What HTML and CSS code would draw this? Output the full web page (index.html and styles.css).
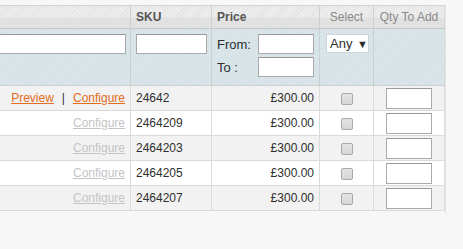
FILE: index.html
```html
<!DOCTYPE html>
<html lang="en">
<head>
    <meta charset="UTF-8">
    <title>Associated Products</title>
    <link rel="stylesheet" href="styles.css">
</head>
<body>
    <div class="grid">
        <table class="data">
            <colgroup>
                <col class="col-name">
                <col class="col-sku">
                <col class="col-price">
                <col class="col-select">
                <col class="col-qty">
            </colgroup>
            <thead>
                <tr class="headings">
                    <th></th>
                    <th class="sort">SKU</th>
                    <th class="sort">Price</th>
                    <th class="no-link center">Select</th>
                    <th class="no-link center">Qty To Add</th>
                </tr>
                <tr class="filter">
                    <th><input type="text" class="input-name"></th>
                    <th><input type="text" class="input-sku"></th>
                    <th>
                        <div class="range">
                            <div class="range-line"><span>From:</span><input type="text" class="input-range"></div>
                            <div class="range-line"><span>To :</span><input type="text" class="input-range"></div>
                        </div>
                    </th>
                    <th><div class="select-any">Any <span class="arrow">&#9660;</span></div></th>
                    <th></th>
                </tr>
            </thead>
            <tbody>
                <tr class="even">
                    <td class="actions"><a href="#" class="link">Preview</a><span class="sep">|</span><a href="#" class="link">Configure</a></td>
                    <td>24642</td>
                    <td class="num">&pound;300.00</td>
                    <td class="center"><span class="checkbox"></span></td>
                    <td class="center"><input type="text" class="input-qty"></td>
                </tr>
                <tr>
                    <td class="actions"><a href="#" class="link disabled">Configure</a></td>
                    <td>2464209</td>
                    <td class="num">&pound;300.00</td>
                    <td class="center"><span class="checkbox"></span></td>
                    <td class="center"><input type="text" class="input-qty"></td>
                </tr>
                <tr class="even">
                    <td class="actions"><a href="#" class="link disabled">Configure</a></td>
                    <td>2464203</td>
                    <td class="num">&pound;300.00</td>
                    <td class="center"><span class="checkbox"></span></td>
                    <td class="center"><input type="text" class="input-qty"></td>
                </tr>
                <tr>
                    <td class="actions"><a href="#" class="link disabled">Configure</a></td>
                    <td>2464205</td>
                    <td class="num">&pound;300.00</td>
                    <td class="center"><span class="checkbox"></span></td>
                    <td class="center"><input type="text" class="input-qty"></td>
                </tr>
                <tr class="even">
                    <td class="actions"><a href="#" class="link disabled">Configure</a></td>
                    <td>2464207</td>
                    <td class="num">&pound;300.00</td>
                    <td class="center"><span class="checkbox"></span></td>
                    <td class="center"><input type="text" class="input-qty"></td>
                </tr>
            </tbody>
        </table>
    </div>
</body>
</html>
```

FILE: styles.css
```css
body {
    margin: 0;
    padding: 5px 0 0 0;
    background: #f7f7f7;
    font-family: 'Liberation Sans', Arial, sans-serif;
    font-size: 12px;
    color: #2f2f2f;
    overflow: hidden;
}
.grid {
    width: 445px;
    overflow: hidden;
    border-right: 1px solid #e4e4e4;
    padding-bottom: 3px;
}
.data {
    margin-left: -100px;
    border-collapse: collapse;
    table-layout: fixed;
    width: 544px;
    border-top: 1px solid #d4d4d4;
    border-right: 1px solid #dadada;
}
.col-name { width: 230px; }
.col-sku { width: 81px; }
.col-price { width: 108px; }
.col-select { width: 54px; }
.col-qty { width: 71px; }

/* headings */
.headings th {
    height: 22px;
    padding: 0 5px;
    text-align: left;
    border-left: 1px solid #d0d0d0;
    border-bottom: 1px solid #c4c9cb;
    background:
        linear-gradient(to bottom, rgba(255,255,255,0) 0, rgba(255,255,255,0) 50%, #e1e1e1 50%, #e1e1e1 100%),
        repeating-linear-gradient(135deg, #eeeeee 0, #eeeeee 2px, #e2e2e2 2px, #e2e2e2 3px);
    font-weight: bold;
    color: #555;
}
.headings th.no-link {
    font-weight: normal;
    color: #8a8a8a;
}
.center { text-align: center !important; }

/* filter */
.filter th {
    height: 56px;
    padding: 0 5px;
    text-align: left;
    vertical-align: top;
    border-left: 1px solid #c8d0d3;
    border-bottom: 1px solid #c8d0d3;
    background: repeating-linear-gradient(135deg, #dae6ea 0, #dae6ea 2px, #d2dfe3 2px, #d2dfe3 3px);
    font-weight: normal;
    font-size: 13px;
    color: #2f2f2f;
}
input[type=text] {
    box-sizing: border-box;
    height: 20px;
    margin: 0;
    padding: 0 2px;
    border: 1px solid #aaa;
    border-top-color: #999;
    background: #fff;
    font-family: inherit;
    font-size: 12px;
}
.input-name {
    width: 220px;
    margin-top: 5px !important;
}
.input-sku {
    width: 71px;
    margin-top: 5px !important;
}
.range {
    padding-top: 5px;
}
.range-line {
    display: flex;
    justify-content: space-between;
    align-items: center;
    margin-bottom: 3px;
}
.input-range {
    width: 56px;
}
.select-any {
    box-sizing: border-box;
    width: 43px;
    height: 19px;
    margin: 5px 0 0 1px;
    padding-left: 3px;
    background: #fff;
    border: 1px solid #cdd5d8;
    line-height: 17px;
    font-size: 13px;
}
.arrow {
    font-size: 11px;
    margin-left: 1px;
}

/* rows */
tbody td {
    height: 24px;
    padding: 0 5px;
    border-left: 1px solid #dadada;
    border-bottom: 1px solid #dadada;
    background: #fff;
    white-space: nowrap;
}
tbody tr.even td {
    background: #f2f2f2;
}
.actions {
    text-align: right;
}
.num {
    text-align: right;
}
.link {
    color: #e26c20;
    text-decoration: underline;
}
.link.disabled {
    color: #c4c4c4;
}
.sep {
    margin: 0 8px 0 8px;
    color: #333;
}
.checkbox {
    display: inline-block;
    box-sizing: border-box;
    width: 12px;
    height: 12px;
    border: 1px solid #a9a9a9;
    border-radius: 2px;
    background: linear-gradient(#e4e4e4, #d6d6d6);
    vertical-align: middle;
}
.input-qty {
    width: 46px;
    height: 21px !important;
    vertical-align: middle;
}
```
